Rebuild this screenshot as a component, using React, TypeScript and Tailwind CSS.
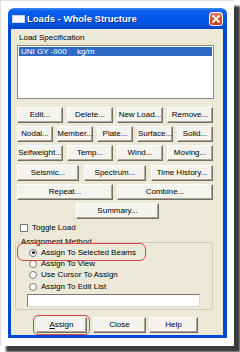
import React from "react";

const btn =
  "flex items-center justify-center h-[16px] bg-[#f4f3ee] border border-t-white border-l-white border-r-[#716f64] border-b-[#716f64] shadow-[inset_-1px_-1px_0_#aca899] text-[8px] leading-none text-black whitespace-nowrap";

function Btn({ label, className = "" }: { label: React.ReactNode; className?: string }) {
  return <div className={`${btn} ${className}`}>{label}</div>;
}

function Radio({ label, checked = false, h }: { label: string; checked?: boolean; h: string }) {
  return (
    <div className={`flex items-center ${h} pl-[13px]`}>
      <div className="w-[8px] h-[8px] rounded-full bg-white border border-[#7a7a7a] flex items-center justify-center">
        {checked && <div className="w-[3px] h-[3px] rounded-full bg-[#1a1a1a]" />}
      </div>
      <span className="ml-[4px] text-[8px] leading-none text-black">{label}</span>
    </div>
  );
}

export default function App() {
  return (
    <div className="w-[240px] h-[352px] bg-white" style={{ fontFamily: '"Liberation Sans", Arial, sans-serif' }}>
      <div className="w-[234px] h-[346px] bg-white border-l border-t border-[#e2e2e2] shadow-[6px_6px_2px_#3a3a3a] pl-[7px] pt-[7px]">
        <div className="w-[219px] h-[330px] flex flex-col rounded-t-[6px] overflow-hidden">
          {/* Title bar */}
          <div className="h-[21px] shrink-0 flex items-center pl-[4px] pr-[4px] bg-[linear-gradient(to_bottom,#3e8cf5_0%,#0a60ea_14%,#0058ee_45%,#0053e0_80%,#0145c6_100%)]">
            <div className="w-[13px] h-[8px] bg-white border border-[#c6d6f4]" />
            <span className="ml-[2px] text-[9.5px] font-bold text-white leading-none [text-shadow:1px_1px_0_#0a2a8a]">
              Loads - Whole Structure
            </span>
            <div className="ml-auto w-[14px] h-[14px] rounded-[3px] border border-white bg-[linear-gradient(to_bottom,#ec8266,#d9532f_50%,#c53d1c)] flex items-center justify-center">
              <svg width="8" height="8" viewBox="0 0 8 8">
                <path d="M1 1 L7 7 M7 1 L1 7" stroke="white" strokeWidth="1.8" strokeLinecap="square" />
              </svg>
            </div>
          </div>
          {/* Client */}
          <div className="flex-1 bg-[#ece9d8] border-l-[3px] border-r-[4px] border-b-[3px] border-[#0747d6] flex flex-col">
            <div className="pt-[4px] pl-[8px] h-[14px] text-[8px] leading-[10px] text-black">Load Specification</div>
            <div className="mt-[2px] ml-[6px] w-[197px] h-[54px] bg-white border border-[#8a8a8a] p-[1px]">
              <div className="h-[9px] bg-[#316ac5] text-white text-[8px] leading-[9px] pl-[2px] flex">
                <span className="w-[56px]">UNI GY -900</span>
                <span>kg/m</span>
              </div>
            </div>
            <div className="ml-[6px] w-[196px] flex flex-col">
              <div className="mt-[8px] grid grid-cols-4 gap-x-[4px]">
                <Btn label="Edit..." />
                <Btn label="Delete..." />
                <Btn label="New Load..." />
                <Btn label="Remove..." />
              </div>
              <div className="mt-[3px] grid grid-cols-5 gap-x-[4px]">
                <Btn label="Nodal..." />
                <Btn label="Member..." />
                <Btn label="Plate..." />
                <Btn label="Surface..." />
                <Btn label="Solid..." />
              </div>
              <div className="mt-[3px] grid grid-cols-4 gap-x-[4px]">
                <Btn label="Selfweight..." />
                <Btn label="Temp..." />
                <Btn label="Wind..." />
                <Btn label="Moving..." />
              </div>
              <div className="mt-[4px] grid grid-cols-3 gap-x-[5px]">
                <Btn label="Seismic..." />
                <Btn label="Spectrum..." />
                <Btn label="Time History..." />
              </div>
              <div className="mt-[3px] grid grid-cols-2 gap-x-[4px]">
                <Btn label="Repeat..." />
                <Btn label="Combine..." />
              </div>
              <div className="mt-[3px] flex">
                <Btn label="Summary..." className="ml-[59px] w-[83px]" />
              </div>
            </div>
            {/* Toggle Load */}
            <div className="mt-[4px] ml-[9px] h-[10px] flex items-center">
              <div className="w-[8px] h-[8px] bg-white border border-[#7a7a7a]" />
              <span className="ml-[4px] text-[8px] leading-none text-black">Toggle Load</span>
            </div>
            {/* Group box */}
            <div className="relative mt-[9px] ml-[4px] w-[198px] h-[68px] border border-[#cfccbb] rounded-[3px] pt-[4px]">
              <span className="absolute left-[4px] top-[-6px] px-[1px] bg-[#ece9d8] text-[8px] leading-[10px] text-black">
                Assignment Method
              </span>
              <div className="absolute left-[1px] top-[0px] w-[129px] h-[18px] rounded-[6px] border border-[#d2484a]" />
              <Radio label="Assign To Selected Beams" checked h="h-[11px]" />
              <Radio label="Assign To View" h="h-[11px]" />
              <Radio label="Use Cursor To Assign" h="h-[12px]" />
              <Radio label="Assign To Edit List" h="h-[11px]" />
              <div className="mt-[2px] ml-[11px] w-[173px] h-[13px] bg-white border border-t-[#7a7a7a] border-l-[#7a7a7a] border-r-[#d8d8d8] border-b-[#d8d8d8]" />
            </div>
            {/* Bottom buttons */}
            <div className="mt-[7px] flex">
              <div className="relative ml-[25px] w-[51px]">
                <Btn
                  label={
                    <>
                      <span className="underline">A</span>ssign
                    </>
                  }
                />
                <div className="absolute left-[-3px] right-[-3px] top-[-2px] bottom-[-2px] rounded-[5px] border border-[#d2484a]" />
              </div>
              <Btn label="Close" className="ml-[6px] w-[53px]" />
              <Btn label="Help" className="ml-[3px] w-[49px]" />
            </div>
          </div>
        </div>
      </div>
    </div>
  );
}
